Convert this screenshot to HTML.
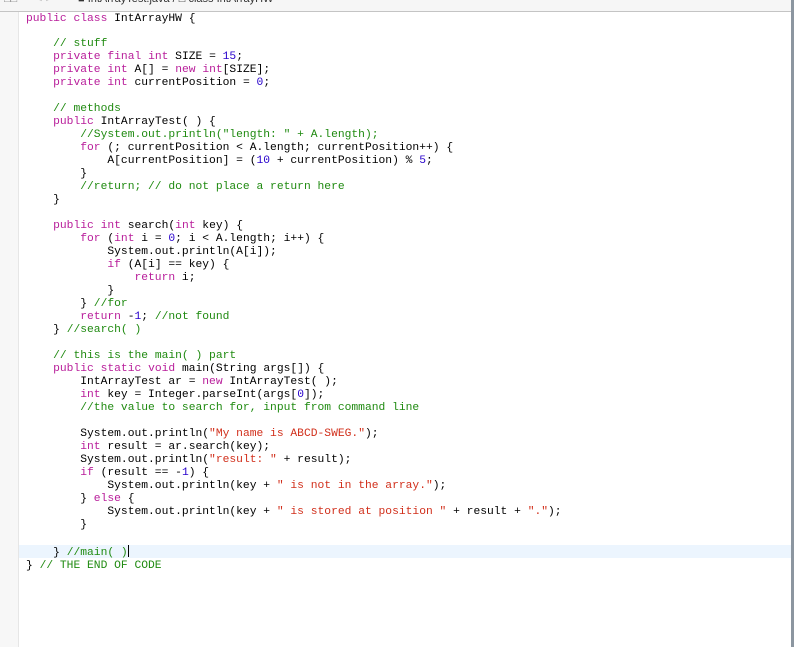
<!DOCTYPE html>
<html><head><meta charset="utf-8"><style>
html,body{margin:0;padding:0;width:794px;height:647px;overflow:hidden;background:#fff;}
#top{position:absolute;left:0;top:0;width:794px;height:11px;background:#f6f6f6;border-bottom:1px solid #c4c4c4;overflow:hidden;}
#top span{position:absolute;top:-7px;font:11px "Liberation Sans",sans-serif;color:#333;}
#gut{position:absolute;left:0;top:12px;width:18px;height:635px;background:#f7f7f7;border-right:1px solid #e6e6e6;}
#rb{position:absolute;left:791px;top:0;width:3px;height:647px;background:#8c96a0;}
#hl{position:absolute;left:19px;top:545px;width:772px;height:13px;background:#ecf5fe;}
pre{position:absolute;left:26px;top:12.5px;margin:0;font:11.3px/12.98px "Liberation Mono",monospace;color:#000;}
.k{color:#b81d9a}.c{color:#1f8a10}.s{color:#d12f1b}.n{color:#2700cc}
#cur{display:inline-block;width:1px;height:12px;background:#000;vertical-align:-2px;}
</style></head><body>
<div id="top"><span style="left:4px;color:#888">&#9633;&#9633;</span><span style="left:36px;color:#bbb">&lt; &gt;</span><span style="left:78px">&#9632; IntArrayTest.java / &#9633; class IntArrayHW</span></div>
<div id="gut"></div>
<div id="hl"></div>
<div id="rb"></div>
<pre><span class="k">public</span> <span class="k">class</span> IntArrayHW {

    <span class="c">// stuff</span>
    <span class="k">private</span> <span class="k">final</span> <span class="k">int</span> SIZE = <span class="n">15</span>;
    <span class="k">private</span> <span class="k">int</span> A[] = <span class="k">new</span> <span class="k">int</span>[SIZE];
    <span class="k">private</span> <span class="k">int</span> currentPosition = <span class="n">0</span>;

    <span class="c">// methods</span>
    <span class="k">public</span> IntArrayTest( ) {
        <span class="c">//System.out.println("length: " + A.length);</span>
        <span class="k">for</span> (; currentPosition &lt; A.length; currentPosition++) {
            A[currentPosition] = (<span class="n">10</span> + currentPosition) % <span class="n">5</span>;
        }
        <span class="c">//return; // do not place a return here</span>
    }

    <span class="k">public</span> <span class="k">int</span> search(<span class="k">int</span> key) {
        <span class="k">for</span> (<span class="k">int</span> i = <span class="n">0</span>; i &lt; A.length; i++) {
            System.out.println(A[i]);
            <span class="k">if</span> (A[i] == key) {
                <span class="k">return</span> i;
            }
        } <span class="c">//for</span>
        <span class="k">return</span> -<span class="n">1</span>; <span class="c">//not found</span>
    } <span class="c">//search( )</span>

    <span class="c">// this is the main( ) part</span>
    <span class="k">public</span> <span class="k">static</span> <span class="k">void</span> main(String args[]) {
        IntArrayTest ar = <span class="k">new</span> IntArrayTest( );
        <span class="k">int</span> key = Integer.parseInt(args[<span class="n">0</span>]);
        <span class="c">//the value to search for, input from command line</span>

        System.out.println(<span class="s">"My name is ABCD-SWEG."</span>);
        <span class="k">int</span> result = ar.search(key);
        System.out.println(<span class="s">"result: "</span> + result);
        <span class="k">if</span> (result == -<span class="n">1</span>) {
            System.out.println(key + <span class="s">" is not in the array."</span>);
        } <span class="k">else</span> {
            System.out.println(key + <span class="s">" is stored at position "</span> + result + <span class="s">"."</span>);
        }

    } <span class="c">//main( )</span><span id="cur"></span>
} <span class="c">// THE END OF CODE</span></pre>
</body></html>
